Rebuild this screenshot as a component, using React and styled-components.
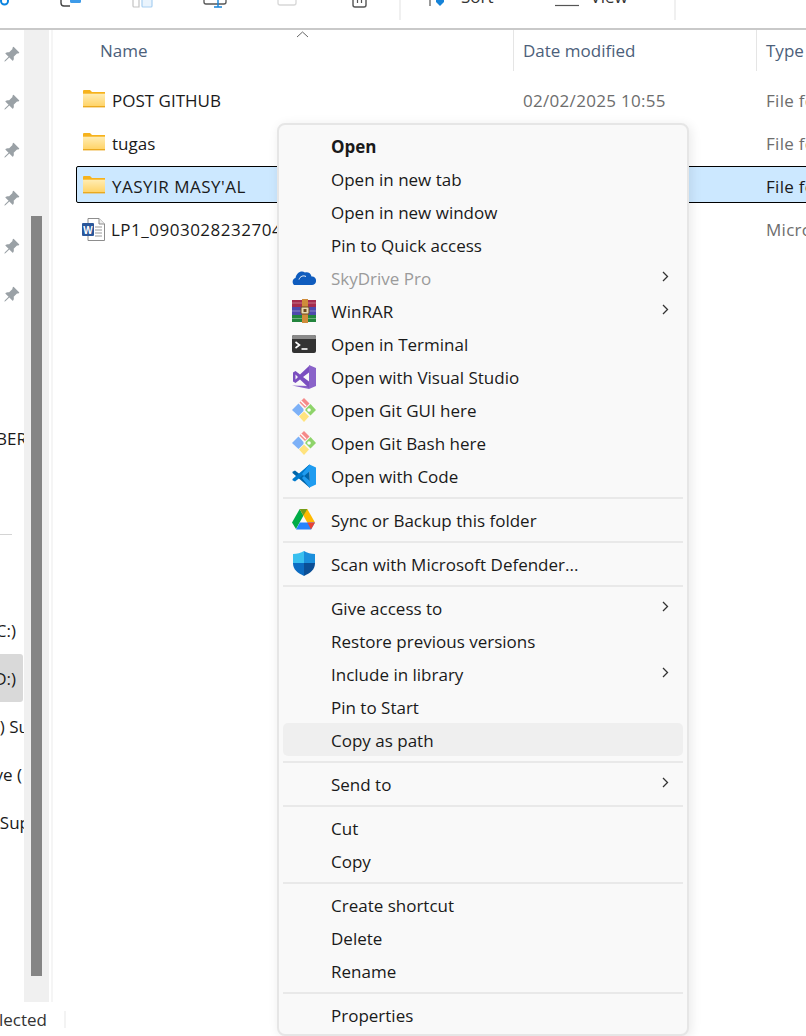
import React from "react";
import styled, { createGlobalStyle } from "styled-components";
import { BsPinAngleFill } from "react-icons/bs";

const GlobalStyle = createGlobalStyle`
  html, body {
    margin: 0;
    padding: 0;
    background: #fff;
    overflow: hidden;
  }
  * { box-sizing: border-box; }
`;

const Page = styled.div`
  position: relative;
  width: 806px;
  height: 1036px;
  overflow: hidden;
  display: flex;
  flex-direction: column;
  font-family: "Open Sans", "Liberation Sans", sans-serif;
  font-size: 17px;
  color: #1a1a1a;
`;

/* ---------- toolbar, cut off by the top of the picture ---------- */
const Toolbar = styled.div`
  height: 30px;
  flex-shrink: 0;
  border-bottom: 2px solid #c9c9c9;
`;

const ToolRow = styled.div`
  height: 20px;
  display: flex;
  align-items: flex-start;
`;

const ToolCell = styled.div`
  width: ${(p) => p.$w}px;
  height: 8px;
  flex-shrink: 0;
  display: flex;
  align-items: flex-end;
  overflow: hidden;
`;

const ToolGlyph = styled.svg`
  margin-left: ${(p) => p.$left || 0}px;
  flex-shrink: 0;
`;

const ToolLabel = styled.span`
  margin-left: ${(p) => p.$left}px;
  color: #333;
  line-height: 22px;
  white-space: nowrap;
`;

const ToolSep = styled.div`
  width: 2px;
  height: 20px;
  flex-shrink: 0;
  background: #f0f0f0;
`;

/* ---------- main area ---------- */
const Body = styled.div`
  flex: 1;
  min-height: 0;
  display: flex;
`;

const Sidebar = styled.div`
  width: 24px;
  flex-shrink: 0;
  overflow: hidden;
`;

const SideRow = styled.div`
  height: 48px;
  display: flex;
  align-items: center;
  justify-content: ${(p) => (p.$pin ? "flex-start" : "flex-end")};
  padding-left: ${(p) => (p.$pin ? 3 : 0)}px;
  width: ${(p) => (p.$active ? 23 : 24)}px;
  background: ${(p) => (p.$active ? "#d9d9d9" : "transparent")};
  border-radius: 0 3px 3px 0;
`;

const SideText = styled.span`
  flex-shrink: 0;
  margin-right: ${(p) => p.$inset}px;
  white-space: nowrap;
  color: #1a1a1a;
`;

const SideRule = styled.div`
  width: 24px;
  height: 48px;
  display: flex;
  align-items: center;
  &::before {
    content: "";
    width: 12px;
    height: 1px;
    background: #d4d4d4;
  }
`;

const Track = styled.div`
  width: 25px;
  flex-shrink: 0;
  background: #f0f0f0;
  padding: 186px 7px 26px 7px;
`;

const Thumb = styled.div`
  height: 100%;
  background: #858585;
`;

const Divider = styled.div`
  width: 2px;
  margin-left: 2px;
  flex-shrink: 0;
  background: #f5f5f5;
`;

const Main = styled.div`
  position: relative;
  flex: 1;
  min-width: 0;
  overflow: hidden;
`;

const Header = styled.div`
  display: grid;
  grid-template-columns: 461px 243px 200px;
  height: 41px;
`;

const HeaderCell = styled.div`
  display: flex;
  align-items: center;
  padding-left: ${(p) => p.$left}px;
  border-right: 1px solid #e5e5e5;
  color: #4c607a;
  white-space: nowrap;
`;

const SortCaret = styled.svg`
  position: absolute;
  left: 243px;
  top: 1px;
`;

const FileList = styled.div`
  display: flex;
  flex-direction: column;
  gap: 6px;
  padding: 9px 0 0 23px;
`;

const FileRow = styled.div`
  display: grid;
  grid-template-columns: 440px 243px 200px;
  align-items: center;
  height: 37px;
  width: 760px;
  padding-left: 6px;
  background: ${(p) => (p.$selected ? "#cce8ff" : "transparent")};
  border: 1px solid ${(p) => (p.$selected ? "#000" : "transparent")};
  border-radius: 2px;
  white-space: nowrap;
`;

const FileName = styled.div`
  display: flex;
  align-items: center;
  gap: 6px;
`;

const FileLabel = styled.span`
  padding-top: 3px;
  letter-spacing: ${(p) => p.$track || 0}px;
`;

const FileMeta = styled.div`
  padding-top: 3px;
  letter-spacing: 0.3px;
  color: ${(p) => (p.$selected ? "#1a1a1a" : "#6d6d6d")};
`;

const StatusBar = styled.div`
  height: 34px;
  flex-shrink: 0;
  display: flex;
  align-items: center;
`;

const StatusText = styled.div`
  width: 47px;
  display: flex;
  justify-content: flex-end;
  color: #333;
  white-space: nowrap;
`;

const StatusSep = styled.div`
  width: 2px;
  height: 17px;
  margin-left: 17px;
  background: #f3f3f3;
`;

/* ---------- context menu, lies over the list ---------- */
const Menu = styled.div`
  position: absolute;
  left: 277px;
  top: 123px;
  width: 412px;
  height: 913px;
  padding: 4px;
  background: #f9f9f9;
  border: 2px solid #e6e6e6;
  border-radius: 8px;
  box-shadow: 2px 2px 12px rgba(0, 0, 0, 0.09);
`;

const Item = styled.div`
  height: 33px;
  display: flex;
  align-items: center;
  border-radius: 5px;
  background: ${(p) => (p.$hover ? "#efefef" : "transparent")};
  color: ${(p) => (p.$disabled ? "#9b9b9b" : "#1a1a1a")};
  font-weight: ${(p) => (p.$bold ? 700 : 400)};
  white-space: nowrap;
`;

const ItemLabel = styled.span`
  padding-top: 2px;
`;

const IconSlot = styled.div`
  width: 48px;
  flex-shrink: 0;
  display: flex;
  align-items: center;
  padding-left: 9px;
`;

const Chevron = styled.svg`
  margin-left: auto;
  margin-right: 14px;
  margin-top: -3px;
`;

const Sep = styled.div`
  height: 11px;
  display: flex;
  align-items: center;
  &::before {
    content: "";
    width: 100%;
    height: 2px;
    background: #e9e9e9;
  }
`;

const WordSvg = styled.svg`
  margin-left: -1px;
  margin-top: 4px;
`;

/* ---------- drawings ---------- */
const Folder = () => (
  <svg width="23" height="18" viewBox="0 0 23 18">
    <defs>
      <linearGradient id="folderBody" x1="0" y1="0" x2="0" y2="1">
        <stop offset="0" stopColor="#ffeeb8" />
        <stop offset="1" stopColor="#ffd263" />
      </linearGradient>
    </defs>
    <path d="M0 1a1 1 0 0 1 1-1h6l2 2h13v3H0z" fill="#f6b21c" />
    <rect x="0" y="3" width="22" height="14" fill="url(#folderBody)" />
    <rect x="0" y="16" width="22" height="1.4" fill="#eaa91f" />
    <rect x="0" y="3" width="22" height="1" fill="#f9c348" />
  </svg>
);

const WordDoc = () => (
  <WordSvg width="23" height="23" viewBox="0 0 23 23">
    <path d="M6 .5h11l5.5 5.5v16.5H6z" fill="#fff" stroke="#8d8d8d" />
    <path d="M17 .5V6h5.500" fill="#eee" stroke="#8d8d8d" />
    <path d="M13 9h7M13 12h7M13 15h7M13 18h7" stroke="#9a9a9a" />
    <rect x="0" y="5" width="12" height="13" rx="1" fill="#2b579a" />
    <text x="6" y="15.5" fontSize="10" fontWeight="700" textAnchor="middle" fill="#fff" fontFamily="Liberation Sans, sans-serif">W</text>
  </WordSvg>
);

const Cloud = () => (
  <svg width="24" height="18" viewBox="0 0 24 18">
    <path d="M2 16c-2-2-2-6 1.5-7C4.500 4 9 1 13 3.500c2.500-1 6 .5 6.500 4 3-.5 5 2 4.500 5-.2 2-2 3.500-4 3.500z" fill="#0f5cbe" />
    <path d="M7 10.500c1-3 4-4.500 7-3" fill="none" stroke="#f9f9f9" strokeWidth="1" />
  </svg>
);

const WinRar = () => (
  <svg width="24" height="24" viewBox="0 0 24 24">
    <rect x="0" y="1" width="24" height="7" fill="#a52b4d" />
    <rect x="0" y="8" width="24" height="8" fill="#4e49ad" />
    <rect x="0" y="16" width="24" height="7" fill="#23853d" />
    <path d="M0 4h24M0 12h24M0 19.5h24" stroke="rgba(255,255,255,0.35)" />
    <rect x="10" y="0" width="6" height="24" fill="#cf8c3a" />
    <rect x="9" y="8" width="8" height="7" rx="1" fill="#e8d9b0" stroke="#6e4a1e" />
    <rect x="11.5" y="10" width="3" height="3" fill="#6e4a1e" />
  </svg>
);

const TerminalIcon = () => (
  <svg width="24" height="18" viewBox="0 0 24 18">
    <rect width="24" height="18" rx="2" fill="#333" />
    <path d="M0 2a2 2 0 0 1 2-2h20a2 2 0 0 1 2 2v2H0z" fill="#8a8a8a" />
    <path d="M3.5 7l4 3-4 3" fill="none" stroke="#fff" strokeWidth="1.6" />
    <path d="M9.5 14h6" stroke="#fff" strokeWidth="1.6" />
  </svg>
);

const VisualStudio = () => (
  <svg width="24" height="24" viewBox="0 0 24 24">
    <path d="M17 0l7 3v18l-7 3-17-3.500L17 21z" fill="#8a63c9" />
    <path
      fillRule="evenodd"
      d="M1 7.500L3.500 6 8 9.500 17 1v22L8 14.500 3.500 18 1 16.500zM3.500 9.500v5L6 12zM11 12l6 4.500v-9z"
      fill="#7b4fc0"
    />
  </svg>
);

const GitIcon = () => (
  <svg width="24" height="24" viewBox="0 0 24 24">
    <path d="M0 12l6.500-6.500L11.500 11v2l-5 5z" fill="#7db1f7" />
    <path d="M7.500 4.500L12 0l5.500 5.500-4.500 4.500z" fill="#f58a8a" />
    <path d="M13.500 11l5-5L24 12l-5.500 5.500-5-5z" fill="#8ed46a" />
    <path d="M7 18.500l5-5 5 5-5 5.500z" fill="#ffe37e" />
    <circle cx="17" cy="12" r="1.8" fill="#fff" />
    <path d="M9 3l5 5" stroke="#fff" strokeWidth="1.2" />
  </svg>
);

const VsCode = () => (
  <svg width="24" height="24" viewBox="0 0 24 24">
    <path d="M17.5.5L7.500 10 3 6.500.5 7.700V9L18 24z" fill="#0065a9" />
    <path d="M.5 15L17.500.5 18 6 3 17.500.5 16.300z" fill="#007acc" />
    <path fillRule="evenodd" d="M17.500.5L24 3.500v17l-6.500 3L10 14l2-2-2-2zM18 7l-6 5 6 5z" fill="#1f9cf0" />
  </svg>
);

const Drive = () => (
  <svg width="23" height="21" viewBox="0 0 23 21">
    <path d="M7.700 0l3.800 6.500L4 20 0 13.500z" fill="#00ac47" />
    <path d="M7.700 0h7.600L23 13.500h-7.700z" fill="#ffba00" />
    <path d="M4 20.500l3.800-7H23l-4 7z" fill="#2684fc" />
    <path d="M15.300 13.500H23l-4 7z" fill="#ea4335" />
    <path d="M7.700 0h7.600l-3.800 6.500z" fill="#00832d" opacity="0.55" />
  </svg>
);

const Defender = () => (
  <svg width="24" height="25" viewBox="0 0 24 25">
    <path d="M12 0C9 2 5 3 1 3v9h11z" fill="#39c0ef" />
    <path d="M12 0c3 2 7 3 11 3v9H12z" fill="#1b8fdc" />
    <path d="M1 12h11v13C6 22 1 19 1 12z" fill="#0c6cc2" />
    <path d="M23 12H12v13c6-3 11-6 11-13z" fill="#0b4f96" />
  </svg>
);

const MenuArrow = () => (
  <Chevron width="7" height="11" viewBox="0 0 7 11">
    <path d="M1 1l4.500 4.500L1 10" fill="none" stroke="#333" strokeWidth="1.3" />
  </Chevron>
);

const sideRows = [
  { pin: true }, { pin: true }, { pin: true }, { pin: true }, { pin: true }, { pin: true },
  {}, {},
  { text: "NUMBER", inset: -3 },
  {},
  { rule: true },
  {},
  { text: "Local Disk (C:)", inset: 8 },
  { text: "Data (D:)", inset: 7, active: true },
  { text: "(E:) Su", inset: -5 },
  { text: "Drive (", inset: 2 },
  { text: "Sup", inset: -6 },
];

const files = [
  { name: "POST GITHUB", date: "02/02/2025 10:55", type: "File folder", icon: <Folder /> },
  { name: "tugas", type: "File folder", icon: <Folder /> },
  { name: "YASYIR MASY'AL", type: "File folder", icon: <Folder />, selected: true, track: 0.5 },
  { name: "LP1_09030282327040", type: "Microsoft Word", icon: <WordDoc />, track: 0.5 },
];

const menu = [
  { label: "Open", bold: true },
  { label: "Open in new tab" },
  { label: "Open in new window" },
  { label: "Pin to Quick access" },
  { label: "SkyDrive Pro", icon: <Cloud />, disabled: true, arrow: true },
  { label: "WinRAR", icon: <WinRar />, arrow: true },
  { label: "Open in Terminal", icon: <TerminalIcon /> },
  { label: "Open with Visual Studio", icon: <VisualStudio /> },
  { label: "Open Git GUI here", icon: <GitIcon /> },
  { label: "Open Git Bash here", icon: <GitIcon /> },
  { label: "Open with Code", icon: <VsCode /> },
  { sep: true },
  { label: "Sync or Backup this folder", icon: <Drive /> },
  { sep: true },
  { label: "Scan with Microsoft Defender...", icon: <Defender /> },
  { sep: true },
  { label: "Give access to", arrow: true },
  { label: "Restore previous versions" },
  { label: "Include in library", arrow: true },
  { label: "Pin to Start" },
  { label: "Copy as path", hover: true },
  { sep: true },
  { label: "Send to", arrow: true },
  { sep: true },
  { label: "Cut" },
  { label: "Copy" },
  { sep: true },
  { label: "Create shortcut" },
  { label: "Delete" },
  { label: "Rename" },
  { sep: true },
  { label: "Properties" },
];

const App = () => {
  return (
    <Page>
      <GlobalStyle />
      <Toolbar>
        <ToolRow>
          <ToolCell $w={60}>
            <ToolGlyph width="10" height="8">
              <circle cx="4.5" cy="1" r="3.5" fill="none" stroke="#0a84e0" strokeWidth="2" />
            </ToolGlyph>
          </ToolCell>
          <ToolCell $w={72}>
            <ToolGlyph width="22" height="8" viewBox="0 0 22 8">
              <path d="M1 0v3a3 3 0 0 0 3 3h6" fill="none" stroke="#444" strokeWidth="1.4" />
              <path d="M10 0v1.500A1.500 1.500 0 0 0 11.500 3H20a1.500 1.500 0 0 0 1-1.500V0z" fill="#3d9be9" />
            </ToolGlyph>
          </ToolCell>
          <ToolCell $w={71}>
            <ToolGlyph width="21" height="8" viewBox="0 0 21 8">
              <path d="M1 0v6a1 1 0 0 0 1 1h5V0" fill="none" stroke="#c4c4c4" strokeWidth="1.2" />
              <path d="M10 0v6a1 1 0 0 0 1 1h8a1 1 0 0 0 1-1V0" fill="#eaf4fd" stroke="#a9d0f2" strokeWidth="1.2" />
            </ToolGlyph>
          </ToolCell>
          <ToolCell $w={74}>
            <ToolGlyph width="24" height="8" viewBox="0 0 24 8">
              <path d="M1 0v2a2 2 0 0 0 2 2h18a2 2 0 0 0 2-2V0" fill="none" stroke="#555" strokeWidth="1.3" />
              <path d="M15 0v7M11 7h8" stroke="#1683d8" strokeWidth="1.4" />
            </ToolGlyph>
          </ToolCell>
          <ToolCell $w={74}>
            <ToolGlyph width="20" height="8" viewBox="0 0 20 8">
              <path d="M1 0v3a2 2 0 0 0 2 2h14a2 2 0 0 0 2-2V0" fill="none" stroke="#d8d8d8" strokeWidth="1.3" />
            </ToolGlyph>
          </ToolCell>
          <ToolCell $w={48}>
            <ToolGlyph width="17" height="8" viewBox="0 0 17 8">
              <path d="M2 0v5a2 2 0 0 0 2 2h9a2 2 0 0 0 2-2V0" fill="none" stroke="#555" strokeWidth="1.4" />
              <path d="M6.500 0v3M10.500 0v3" stroke="#555" strokeWidth="1.2" />
            </ToolGlyph>
          </ToolCell>
          <ToolSep />
          <ToolCell $w={273}>
            <ToolGlyph $left={28} width="20" height="8" viewBox="0 0 20 8">
              <path d="M1 0v6" stroke="#555" strokeWidth="1.2" />
              <path d="M7 0h8v2l-4 4-4-4z" fill="#1683d8" />
            </ToolGlyph>
            <ToolLabel $left={12}>Sort</ToolLabel>
            <ToolGlyph $left={61} width="24" height="8" viewBox="0 0 24 8">
              <path d="M0 5.500h24" stroke="#555" strokeWidth="1.2" />
            </ToolGlyph>
            <ToolLabel $left={12}>View</ToolLabel>
          </ToolCell>
          <ToolSep />
        </ToolRow>
      </Toolbar>

      <Body>
        <Sidebar>
          {sideRows.map((row, i) => {
            if (row.rule) return <SideRule key={i} />;
            return (
              <SideRow key={i} $pin={row.pin} $active={row.active}>
                {row.pin && <BsPinAngleFill size={17} color="#9aa1a6" />}
                {row.text && <SideText $inset={row.inset}>{row.text}</SideText>}
              </SideRow>
            );
          })}
        </Sidebar>
        <Track>
          <Thumb />
        </Track>
        <Divider />
        <Main>
          <SortCaret width="13" height="7" viewBox="0 0 13 7">
            <path d="M1 6l5.500-5L12 6" fill="none" stroke="#666" strokeWidth="1" />
          </SortCaret>
          <Header>
            <HeaderCell $left={47}>Name</HeaderCell>
            <HeaderCell $left={9}>Date modified</HeaderCell>
            <HeaderCell $left={9}>Type</HeaderCell>
          </Header>
          <FileList>
            {files.map((f) => (
              <FileRow key={f.name} $selected={f.selected}>
                <FileName>
                  {f.icon}
                  <FileLabel $track={f.track}>{f.name}</FileLabel>
                </FileName>
                <FileMeta>{f.date}</FileMeta>
                <FileMeta $selected={f.selected}>{f.type}</FileMeta>
              </FileRow>
            ))}
          </FileList>
        </Main>
      </Body>

      <StatusBar>
        <StatusText>selected</StatusText>
        <StatusSep />
      </StatusBar>

      <Menu>
        {menu.map((m, i) =>
          m.sep ? (
            <Sep key={i} />
          ) : (
            <Item key={i} $bold={m.bold} $disabled={m.disabled} $hover={m.hover}>
              <IconSlot>{m.icon}</IconSlot>
              <ItemLabel>{m.label}</ItemLabel>
              {m.arrow && <MenuArrow />}
            </Item>
          )
        )}
      </Menu>
    </Page>
  );
};

export default App;
